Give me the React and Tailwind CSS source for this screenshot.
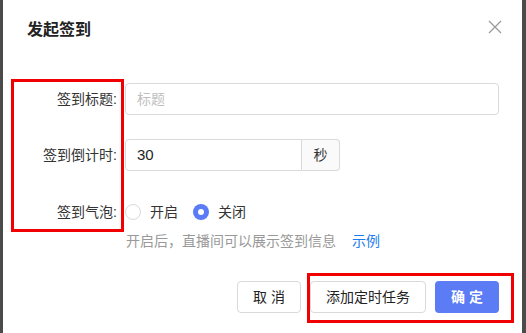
import React from "react";

function Label({ children }) {
    return (
        <div className="w-[122px] shrink-0 pr-[8px] text-right text-[14px] text-[#333]">
            {children}
        </div>
    );
}

export default function App() {
    return (
        <div className="w-[526px] h-[333px] bg-[#4b4b4b] flex font-['Liberation_Sans','Noto_Sans_CJK_SC',sans-serif]">
            <div className="relative ml-[3px] w-[519px] h-full bg-white">
                {/* header */}
                <div className="flex items-center justify-between pl-[24px] pr-[20px] pt-[18px] h-[42px]">
                    <span className="text-[16px] font-bold leading-[24px] text-[#222]">发起签到</span>
                    <svg width="14" height="14" viewBox="0 0 14 14" className="-mt-[6px]">
                        <path d="M1 1L13 13M13 1L1 13" stroke="#999" strokeWidth="1.3" />
                    </svg>
                </div>

                {/* form */}
                <div className="mt-[41px] flex flex-col">
                    <div className="flex items-center h-[32px]">
                        <Label>签到标题:</Label>
                        <div className="w-[374px] h-[32px] rounded-[4px] border border-[#d9d9d9] px-[11px] flex items-center text-[14px] text-[#bfbfbf]">
                            标题
                        </div>
                    </div>

                    <div className="flex items-center h-[32px] mt-[24px]">
                        <Label>签到倒计时:</Label>
                        <div className="flex h-[32px]">
                            <div className="w-[177px] rounded-l-[4px] border border-[#d9d9d9] px-[11px] flex items-center text-[15px] text-[#222]">
                                30
                            </div>
                            <div className="w-[38px] rounded-r-[4px] border border-l-0 border-[#d9d9d9] bg-[#fafafa] flex items-center justify-center text-[14px] text-[#333]">
                                秒
                            </div>
                        </div>
                    </div>

                    <div className="flex items-center h-[32px] mt-[25px]">
                        <Label>签到气泡:</Label>
                        <div className="flex items-center text-[14px] text-[#333]">
                            <span className="w-[16px] h-[16px] rounded-full border border-[#d9d9d9] bg-white" />
                            <span className="ml-[9px]">开启</span>
                            <span className="ml-[15px] w-[16px] h-[16px] rounded-full bg-[#5b7cf5] flex items-center justify-center">
                                <span className="w-[6px] h-[6px] rounded-full bg-white" />
                            </span>
                            <span className="ml-[9px]">关闭</span>
                        </div>
                    </div>

                    <div className="flex items-center mt-[2px] pl-[123px] h-[22px] text-[14px]">
                        <span className="text-[#999]">开启后，直播间可以展示签到信息</span>
                        <span className="ml-[16px] text-[#1a7cf0]">示例</span>
                    </div>
                </div>

                {/* footer */}
                <div className="flex justify-end gap-[9px] pr-[23px] mt-[29px]">
                    <button className="w-[64px] h-[32px] rounded-[4px] border border-[#d9d9d9] bg-white text-[14px] text-[#222]">取 消</button>
                    <button className="w-[116px] h-[32px] rounded-[4px] border border-[#d9d9d9] bg-white text-[14px] text-[#222]">添加定时任务</button>
                    <button className="w-[64px] h-[32px] rounded-[4px] bg-[#5b7cf5] text-[14px] text-white font-bold">确 定</button>
                </div>

                {/* annotation boxes */}
                <div className="absolute left-[8px] top-[79px] w-[113px] h-[153px] border-[3px] border-[#f00000]" />
                <div className="absolute left-[304px] top-[273px] w-[207px] h-[50px] border-[3px] border-[#f00000]" />
            </div>
        </div>
    );
}
